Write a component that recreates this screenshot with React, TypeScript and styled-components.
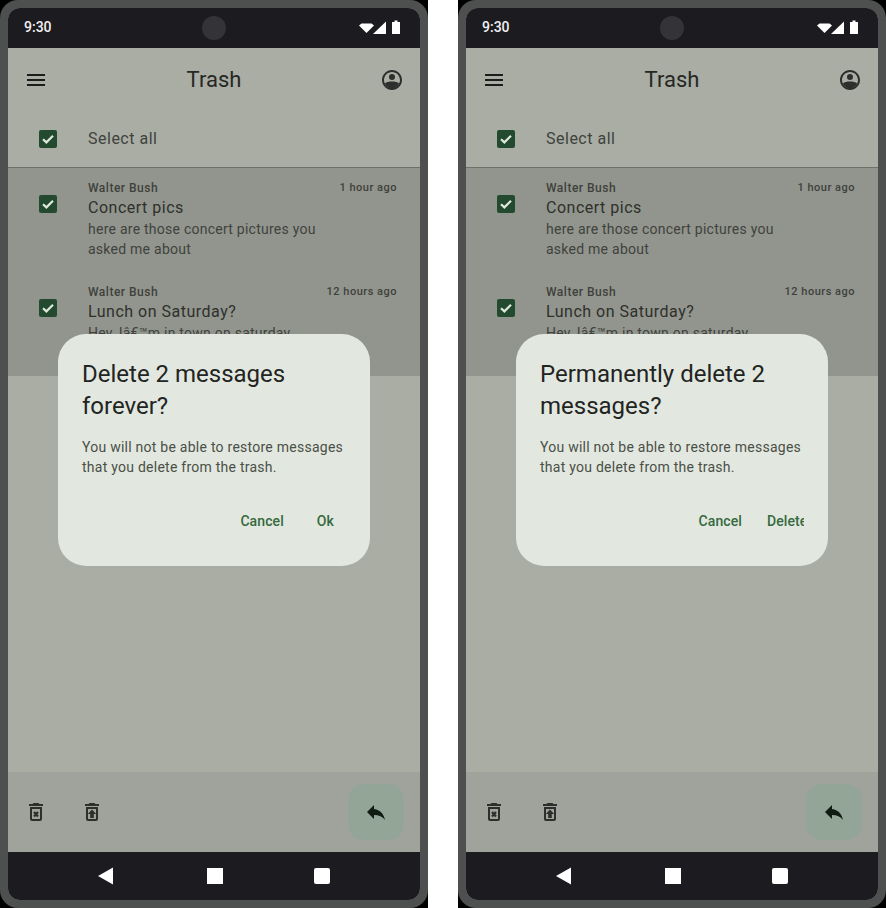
import React from 'react';
import styled, { createGlobalStyle } from 'styled-components';

const GlobalStyle = createGlobalStyle`
  html, body {
    margin: 0;
    padding: 0;
    background: #fff;
    font-family: Roboto, "Liberation Sans", sans-serif;
  }
`;

const Page = styled.div`
  display: flex;
  gap: 30px;
  width: 886px;
  height: 908px;
  overflow: hidden;
`;

const PhoneCase = styled.div`
  width: 428px;
  height: 908px;
  background: #000;
`;

const Phone = styled.div`
  box-sizing: border-box;
  width: 428px;
  height: 908px;
  padding: 8px;
  background: #4e4f4f;
  border-radius: 18px;
`;

const Screen = styled.div`
  position: relative;
  display: flex;
  flex-direction: column;
  height: 892px;
  background: #a9ada4;
  border-radius: 12px;
  overflow: hidden;
`;

const StatusBar = styled.div`
  position: relative;
  display: flex;
  flex: 0 0 40px;
  align-items: center;
  justify-content: space-between;
  padding: 0 20px 2px 16px;
  box-sizing: border-box;
  background: #1c1b1f;
`;

const Clock = styled.span`
  color: #f2f0f4;
  font-size: 14px;
  font-weight: 500;
`;

const Camera = styled.div`
  position: absolute;
  left: 194px;
  top: 8px;
  width: 24px;
  height: 24px;
  border-radius: 50%;
  background: #343337;
`;

const StatusIcons = styled.div`
  display: flex;
  align-items: center;
  margin-top: 2px;
`;

const AppBar = styled.div`
  display: flex;
  flex: 0 0 64px;
  align-items: center;
  justify-content: space-between;
  padding: 0 16px;
`;

const Title = styled.h1`
  margin: 0;
  color: #262824;
  font-size: 22px;
  font-weight: 400;
  line-height: 28px;
`;

const SelectRow = styled.div`
  display: flex;
  flex: 0 0 56px;
  align-items: center;
  box-sizing: border-box;
  padding: 0 0 1px 31px;
  border-bottom: 1px solid #6e716b;
`;

const Check = styled.div`
  display: flex;
  flex: 0 0 18px;
  align-items: center;
  justify-content: center;
  width: 18px;
  height: 18px;
  border-radius: 2px;
  background: #23492f;
`;

const SelectLabel = styled.span`
  margin-left: 31px;
  color: #3f423d;
  font-size: 16px;
  line-height: 24px;
  letter-spacing: 0.5px;
`;

const List = styled.div`
  flex: 0 0 208px;
  overflow: hidden;
  background: #92958d;
`;

const Message = styled.div`
  display: flex;
  height: 104px;
  box-sizing: border-box;
  padding: 12px 23px 0 31px;
`;

const MessageCheck = styled(Check)`
  margin-top: 15px;
`;

const MessageBody = styled.div`
  flex: 1;
  margin-left: 31px;
  min-width: 0;
`;

const MessageHead = styled.div`
  display: flex;
  justify-content: space-between;
  color: #3e413c;
  font-size: 12px;
  font-weight: 500;
  line-height: 16px;
  letter-spacing: 0.5px;
`;

const MessageTime = styled.span`
  font-size: 11px;
  line-height: 15px;
`;

const Subject = styled.div`
  margin-top: 1px;
  color: #2e302b;
  font-size: 16px;
  line-height: 22px;
  letter-spacing: 0.5px;
`;

const Snippet = styled.div`
  width: 250px;
  color: #3f423d;
  font-size: 14px;
  line-height: 20px;
  letter-spacing: 0.25px;
`;

const Spacer = styled.div`
  flex: 1;
`;

const BottomBar = styled.div`
  display: flex;
  flex: 0 0 80px;
  align-items: center;
  box-sizing: border-box;
  padding: 0 16px;
  background: #a0a39b;
`;

const BarIcon = styled.div`
  display: flex;
  width: 24px;
  height: 24px;
  margin-right: 32px;
`;

const Fab = styled.div`
  display: flex;
  align-items: center;
  justify-content: center;
  width: 56px;
  height: 56px;
  margin-left: auto;
  border-radius: 16px;
  background: #93a596;
`;

const NavBar = styled.div`
  display: flex;
  flex: 0 0 48px;
  align-items: center;
  justify-content: center;
  gap: 91px;
  background: #1c1b1f;
`;

const Dialog = styled.div`
  position: absolute;
  left: 50px;
  top: 326px;
  box-sizing: border-box;
  width: 312px;
  height: 232px;
  padding: 24px;
  border-radius: 28px;
  background: #e2e8df;
`;

const DialogTitle = styled.h2`
  margin: 0;
  color: #22241f;
  font-size: 24px;
  font-weight: 400;
  line-height: 32px;
`;

const DialogText = styled.p`
  margin: 15px 0 0;
  color: #4a4f48;
  font-size: 14px;
  line-height: 20px;
  letter-spacing: 0.25px;
`;

const DialogActions = styled.div<{ $tight?: boolean }>`
  display: flex;
  justify-content: flex-end;
  gap: ${(p) => (p.$tight ? '1px' : '9px')};
  margin-top: 34px;
  overflow: hidden;
`;

const ActionButton = styled.span`
  flex-shrink: 0;
  padding: 0 12px;
  color: #36693f;
  font-size: 14px;
  font-weight: 500;
  line-height: 20px;
  letter-spacing: 0.1px;
`;

const ClippedAction = styled.div`
  width: 49px;
  overflow: hidden;
`;

const WifiIcon = () => (
  <svg width="15" height="16" viewBox="0 0 15 16" fill="#fff">
    <path d="M0 5.500 2.500 3.500h10l2.500 2-7.500 7.500z" />
  </svg>
);

const SignalIcon = () => (
  <svg width="13" height="16" viewBox="0 0 13 16" fill="#fff" style={{ marginLeft: -1 }}>
    <path d="M0 14 13 1.500V14z" />
  </svg>
);

const BatteryIcon = () => (
  <svg width="8" height="16" viewBox="0 0 8 16" fill="#fff" style={{ marginLeft: 6 }}>
    <path d="M2.500 .5h3V2H8v12H0V2h2.500z" />
  </svg>
);

const MenuIcon = () => (
  <svg width="24" height="24" viewBox="0 0 24 24" fill="#1b1d1a">
    <path d="M3 18h18v-2H3v2zm0-5h18v-2H3v2zm0-7v2h18V6H3z" />
  </svg>
);

const AccountIcon = () => (
  <svg width="24" height="24" viewBox="0 0 24 24" fill="#2c2f2b">
    <path d="M12 2C6.480 2 2 6.480 2 12s4.480 10 10 10 10-4.480 10-10S17.520 2 12 2zm0 18c-4.400 0-8-3.600-8-8s3.600-8 8-8 8 3.600 8 8-3.600 8-8 8z" />
    <circle cx="12" cy="9" r="3" />
    <path d="M4.800 15.500C6.500 14.100 9.100 13.500 12 13.500s5.500.6 7.200 2C17.900 18.300 15.200 20.500 12 20.500s-5.900-2.200-7.200-5z" />
  </svg>
);

const CheckMark = () => (
  <svg width="18" height="18" viewBox="0 0 18 18" fill="none" stroke="#dfe8dd" strokeWidth="2.200">
    <path d="M4 9.200 7.400 12.400 14 5.800" />
  </svg>
);

const TrashOutline = () => (
  <path d="M15.500 4l-1-1h-5l-1 1H5v2h14V4zM6 19c0 1.100.9 2 2 2h8c1.100 0 2-.9 2-2V7H6v12zM8 9h8v10H8V9z" />
);

const DeleteForeverIcon = () => (
  <svg width="24" height="24" viewBox="0 0 24 24" fill="#2c2f2b">
    <TrashOutline />
    <path d="M10 12l4 4.500M14 12l-4 4.500" fill="none" stroke="#2c2f2b" strokeWidth="2.200" />
  </svg>
);

const RestoreIcon = () => (
  <svg width="24" height="24" viewBox="0 0 24 24" fill="#2c2f2b">
    <TrashOutline />
    <path d="M12 9.500 7.800 14h2.400v4h3.600v-4h2.400z" />
  </svg>
);

const ReplyIcon = () => (
  <svg width="24" height="24" viewBox="0 0 24 24" fill="#101c12">
    <path d="M10 9V5l-7 7 7 7v-4.100c5 0 8.500 1.600 11 5.100-1-5-4-10-11-11z" />
  </svg>
);

const BackIcon = () => (
  <svg width="18" height="18" viewBox="0 0 18 18" fill="#fff">
    <path d="M0 9 15 .5v17z" />
  </svg>
);

const HomeIcon = styled.div`
  width: 16px;
  height: 16px;
  background: #fff;
`;

const RecentIcon = styled(HomeIcon)`
  border-radius: 2px;
`;

const messages = [
  {
    time: '1 hour ago',
    subject: 'Concert pics',
    snippet: 'here are those concert pictures you asked me about',
  },
  {
    time: '12 hours ago',
    subject: 'Lunch on Saturday?',
    snippet: 'Hey, Iâ€™m in town on saturday',
  },
];

const PhoneView = ({
  title,
  action,
  tight,
}: {
  title: string;
  action: React.ReactNode;
  tight?: boolean;
}) => (
  <PhoneCase>
    <Phone>
      <Screen>
        <StatusBar>
          <Clock>9:30</Clock>
          <Camera />
          <StatusIcons>
            <WifiIcon />
            <SignalIcon />
            <BatteryIcon />
          </StatusIcons>
        </StatusBar>
        <AppBar>
          <MenuIcon />
          <Title>Trash</Title>
          <AccountIcon />
        </AppBar>
        <SelectRow>
          <Check>
            <CheckMark />
          </Check>
          <SelectLabel>Select all</SelectLabel>
        </SelectRow>
        <List>
          {messages.map((m) => (
            <Message key={m.subject}>
              <MessageCheck>
                <CheckMark />
              </MessageCheck>
              <MessageBody>
                <MessageHead>
                  <span>Walter Bush</span>
                  <MessageTime>{m.time}</MessageTime>
                </MessageHead>
                <Subject>{m.subject}</Subject>
                <Snippet>{m.snippet}</Snippet>
              </MessageBody>
            </Message>
          ))}
        </List>
        <Spacer />
        <BottomBar>
          <BarIcon>
            <DeleteForeverIcon />
          </BarIcon>
          <BarIcon>
            <RestoreIcon />
          </BarIcon>
          <Fab>
            <ReplyIcon />
          </Fab>
        </BottomBar>
        <NavBar>
          <BackIcon />
          <HomeIcon />
          <RecentIcon />
        </NavBar>
        <Dialog>
          <DialogTitle>{title}</DialogTitle>
          <DialogText>You will not be able to restore messages that you delete from the trash.</DialogText>
          <DialogActions $tight={tight}>
            <ActionButton>Cancel</ActionButton>
            {action}
          </DialogActions>
        </Dialog>
      </Screen>
    </Phone>
  </PhoneCase>
);

function App() {
  return (
    <>
      <GlobalStyle />
      <Page>
        <PhoneView title="Delete 2 messages forever?" action={<ActionButton>Ok</ActionButton>} />
        <PhoneView
          title="Permanently delete 2 messages?"
          tight
          action={
            <ClippedAction>
              <ActionButton>Delete</ActionButton>
            </ClippedAction>
          }
        />
      </Page>
    </>
  );
}

export default App;
